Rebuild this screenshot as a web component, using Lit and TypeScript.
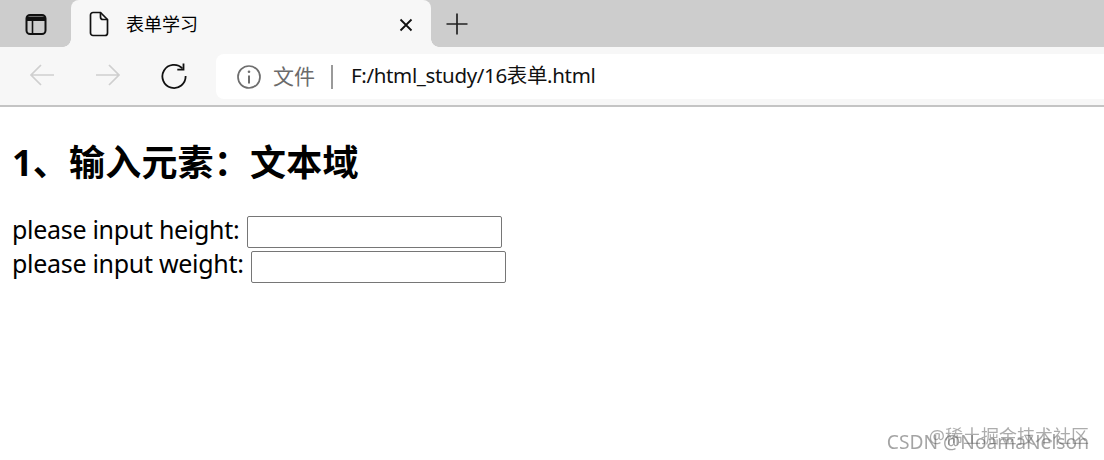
import { LitElement, html, css } from "lit";
import { customElement } from "lit/decorators.js";

@customElement("app-root")
export class AppRoot extends LitElement {
  static styles = css`
    :host { display: block; width: 1104px; height: 460px; overflow: hidden; position: relative; background: #fff; font-family: "Noto Sans", "Noto Sans CJK SC", sans-serif; color: #000; }
    .strip { display: flex; height: 47px; background: #cdcdcd; }
    .wsbtn { width: 71px; display: flex; align-items: center; justify-content: center; box-sizing: border-box; }
    .tab { position: relative; width: 360px; height: 47px; background: #f7f7f7; border-radius: 8px 8px 0 0; display: flex; align-items: center; box-sizing: border-box; padding-left: 18px; }
    .tab::before, .tab::after { content: ""; position: absolute; bottom: 0; width: 8px; height: 8px; }
    .tab::before { left: -8px; background: radial-gradient(circle at 0 0, #cdcdcd 7.5px, #f7f7f7 8px); }
    .tab::after { right: -8px; background: radial-gradient(circle at 100% 0, #cdcdcd 7.5px, #f7f7f7 8px); }
    .tabtitle { margin-left: 17px; font-size: 18px; flex: 1; font-family: "Noto Sans CJK SC", sans-serif; line-height: 24px; margin-bottom: 2px; }
    .tabclose { width: 14px; height: 14px; margin-right: 18px; margin-top: 2px; display: block; }
    .plus { margin-left: 15px; align-self: center; display: block; }
    .toolbar { height: 58px; background: #f7f7f7; border-bottom: 2px solid #c4c4c4; display: flex; align-items: center; }
    .nav { width: 66px; display: flex; justify-content: center; }
    .navs { display: flex; margin-left: 9px; margin-right: 9px; }
    .nav svg { display: block; }
    .addr { flex: 1; height: 45px; background: #fff; border-radius: 8px 0 0 8px; display: flex; align-items: center; box-sizing: border-box; padding-left: 21px; margin-top: 1px; }
    .file { margin: 0 0 4px 12px; font-size: 21px; color: #6b6b6b; font-family: "Noto Sans CJK SC", sans-serif; line-height: 28px; }
    .sep { width: 2px; height: 24px; background: #9a9a9a; margin: 0 18px 0 16px; }
    .url { font-size: 20.5px; letter-spacing: -0.35px; color: #111; line-height: 28px; margin-bottom: 4px; }
    main { padding: 35px 0 0 12px; }
    h1 { margin: 0 0 30px 0; font-size: 36px; letter-spacing: 0.2px; line-height: 42px; font-weight: 700; }
    .row { font-size: 25px; letter-spacing: -0.3px; height: 34.5px; display: flex; align-items: center; white-space: pre; line-height: 34px; }
    .label { margin-bottom: 4px; }
    .row.w .label { margin-bottom: 6px; }
    .field { width: 255px; height: 32px; box-sizing: border-box; border: 1px solid #767676; border-radius: 2px; background: #fff; margin: 2px 0 0 8px; padding: 0; }
    .row.w .field { margin-left: 7px; }
    .mark { position: absolute; right: 15px; top: 424px; font-size: 18px; line-height: 24px; color: rgba(90, 90, 90, 0.5); white-space: nowrap; filter: blur(0.5px); }
    .mark2 { position: absolute; right: 15px; top: 430px; font-size: 19.2px; line-height: 24px; color: rgba(90, 90, 90, 0.55); white-space: nowrap; filter: blur(0.4px); }
  `;

  render() {
    return html`
      <div class="strip">
        <div class="wsbtn">
          <svg width="24" height="24" viewBox="0 0 24 24" fill="none" stroke="#111" stroke-width="2">
            <rect x="2.5" y="3" width="19" height="19" rx="3.5"/>
            <path d="M3 4.5h18V9H3z" fill="#111" stroke="none"/>
            <path d="M8.5 9v13" stroke-width="1.6"/>
          </svg>
        </div>
        <div class="tab">
          <svg width="20" height="26" viewBox="0 0 20 26" fill="none" stroke="#111" stroke-width="1.7">
            <path d="M4 1.5h7.5L18.5 8.5V22a2.5 2.5 0 0 1-2.5 2.5H4A2.5 2.5 0 0 1 1.5 22V4A2.5 2.5 0 0 1 4 1.5z"/>
            <path d="M11.5 1.5V6a2.5 2.5 0 0 0 2.5 2.5h4.5"/>
          </svg>
          <span class="tabtitle">表单学习</span>
          <svg class="tabclose" viewBox="0 0 14 14" stroke="#111" stroke-width="1.8"><path d="M1.5 1.5l11 11M12.5 1.5l-11 11"/></svg>
        </div>
        <svg class="plus" width="22" height="22" viewBox="0 0 22 22" stroke="#222" stroke-width="1.7"><path d="M11 0.5v21M0.5 11h21"/></svg>
      </div>
      <div class="toolbar">
        <div class="navs">
          <div class="nav">
            <svg width="26" height="24" viewBox="0 0 26 24" fill="none" stroke="#cfcfcf" stroke-width="1.7"><path d="M25 12H2M12 2L2 12l10 10"/></svg>
          </div>
          <div class="nav">
            <svg width="26" height="24" viewBox="0 0 26 24" fill="none" stroke="#cfcfcf" stroke-width="1.7"><path d="M1 12h23M14 2l10 10-10 10"/></svg>
          </div>
          <div class="nav">
            <svg width="26" height="26" viewBox="0 0 26 26" fill="none" stroke="#111" stroke-width="1.8"><path d="M21.5 5.5A11.6 11.6 0 1 0 24.6 13"/><path d="M22.5 0.5v6.2h-6.2"/></svg>
          </div>
        </div>
        <div class="addr">
          <svg width="24" height="24" viewBox="0 0 24 24" fill="none" stroke="#6e6e6e" stroke-width="1.7"><circle cx="12" cy="12" r="11"/><path d="M12 10.5v8" stroke-width="2"/><circle cx="12" cy="6.8" r="1.3" fill="#6e6e6e" stroke="none"/></svg>
          <span class="file">文件</span>
          <span class="sep"></span>
          <span class="url">F:/html_study/16表单.html</span>
        </div>
      </div>
      <main>
        <h1>1、输入元素：文本域</h1>
        <div class="row"><span class="label">please input height:</span><input class="field" type="text" /></div>
        <div class="row w"><span class="label">please input weight:</span><input class="field" type="text" /></div>
      </main>
      <div class="mark">@稀土掘金技术社区</div>
      <div class="mark2">CSDN @NoamaNelson</div>
    `;
  }
}
